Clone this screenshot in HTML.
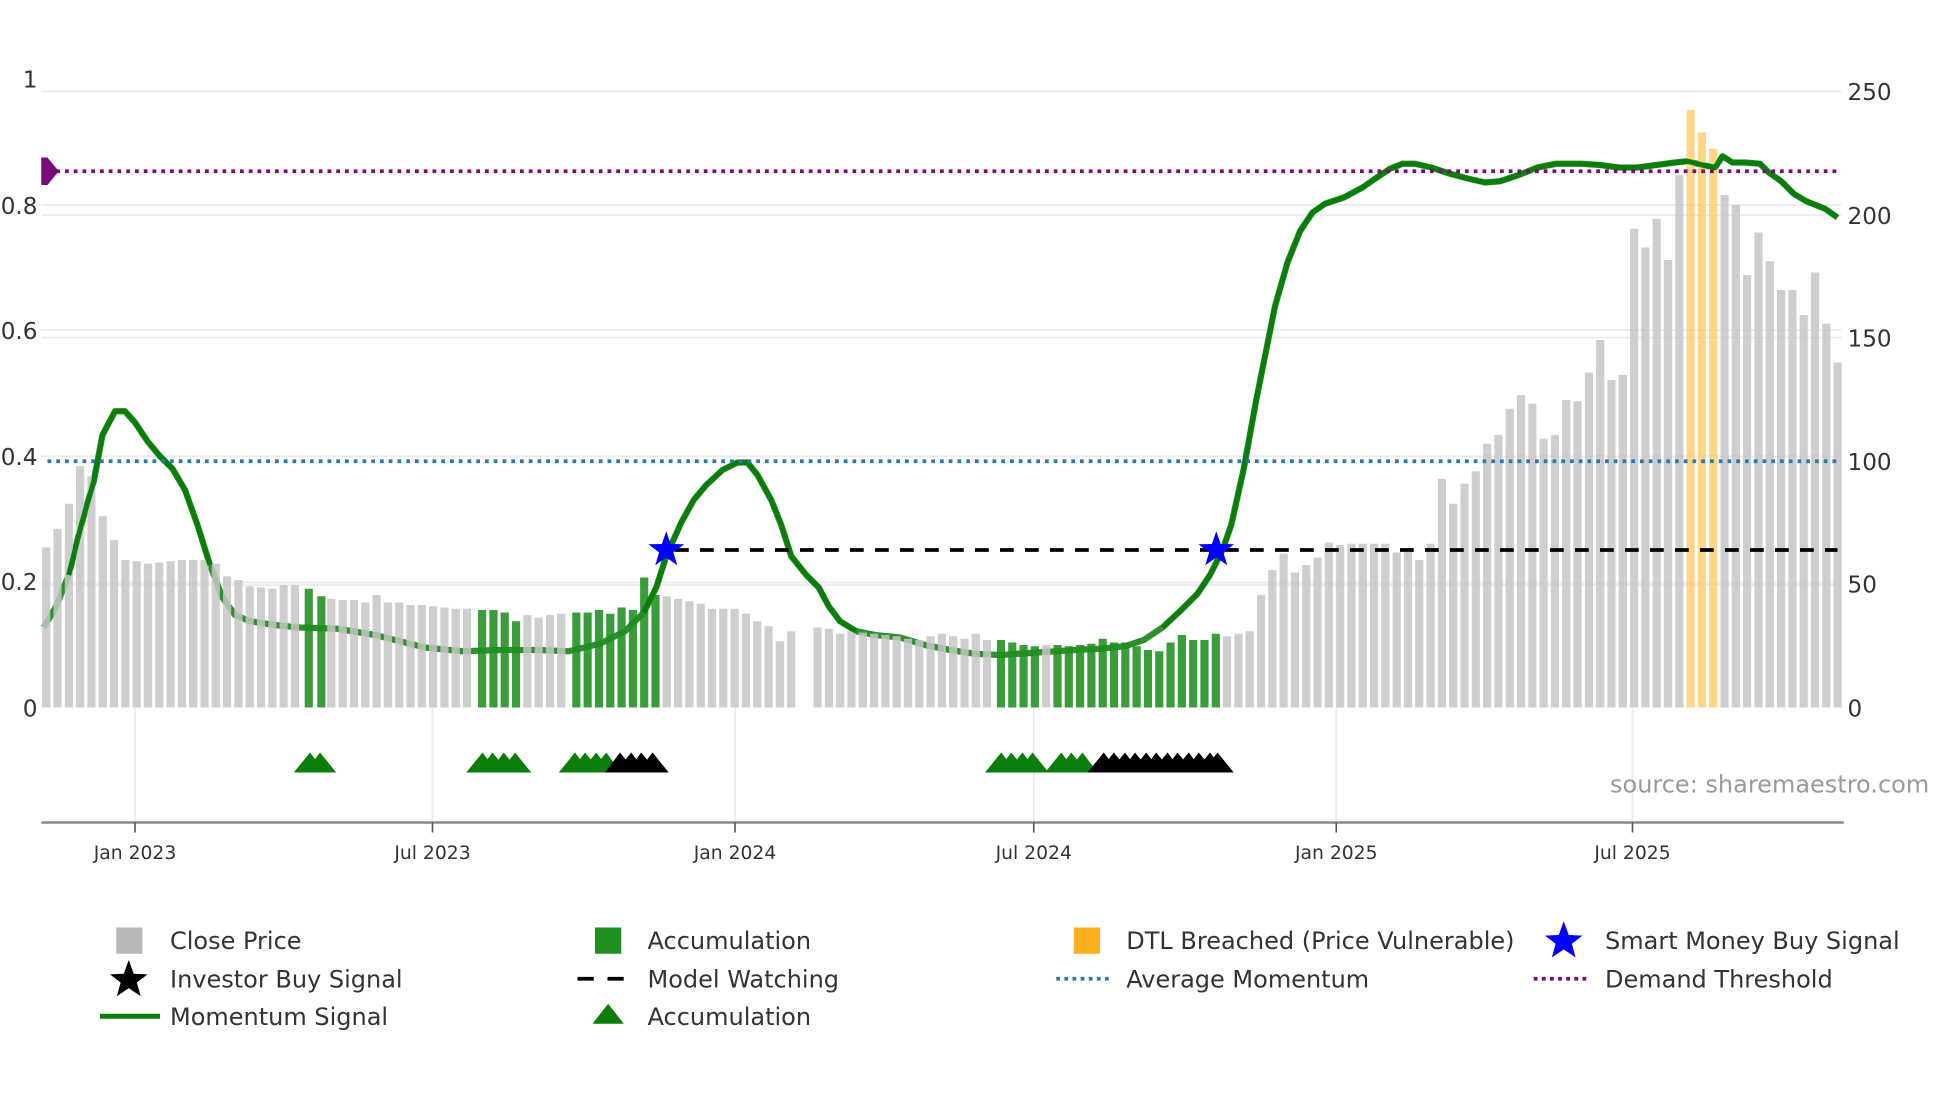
<!DOCTYPE html>
<html><head><meta charset="utf-8"><style>
html,body{margin:0;padding:0;background:#fff;}
svg{display:block;}
text{font-family:"DejaVu Sans","Liberation Sans",sans-serif;fill:#333;}
</style></head><body>
<svg width="1960" height="1102" viewBox="0 0 1568 881.6" preserveAspectRatio="none" xmlns="http://www.w3.org/2000/svg">
<rect width="1568" height="882" fill="#fff"/>
<g stroke="#ececf0" stroke-width="1.5">
<line x1="33" y1="73" x2="1473" y2="73"/>
<line x1="33" y1="164" x2="1473" y2="164"/>
<line x1="33" y1="172" x2="1473" y2="172"/>
<line x1="33" y1="264" x2="1473" y2="264"/>
<line x1="33" y1="270" x2="1473" y2="270"/>
<line x1="33" y1="365" x2="1473" y2="365"/>
<line x1="33" y1="466" x2="1473" y2="466"/>
<line x1="33" y1="468" x2="1473" y2="468"/>
<line x1="108" y1="566" x2="108" y2="658"/>
<line x1="346" y1="566" x2="346" y2="658"/>
<line x1="588" y1="566" x2="588" y2="658"/>
<line x1="827" y1="566" x2="827" y2="658"/>
<line x1="1069" y1="566" x2="1069" y2="658"/>
<line x1="1306" y1="566" x2="1306" y2="658"/>
</g>
<g font-size="18.5">
<text x="30" y="70" text-anchor="end">1</text>
<text x="30" y="171" text-anchor="end">0.8</text>
<text x="30" y="271" text-anchor="end">0.6</text>
<text x="30" y="372" text-anchor="end">0.4</text>
<text x="30" y="472" text-anchor="end">0.2</text>
<text x="30" y="573" text-anchor="end">0</text>
<text x="1478" y="80">250</text>
<text x="1478" y="179">200</text>
<text x="1478" y="277">150</text>
<text x="1478" y="376">100</text>
<text x="1478" y="474">50</text>
<text x="1478" y="573">0</text>
</g>
<polyline fill="none" stroke="#0a7d0a" stroke-width="5" stroke-opacity="0.85" stroke-linejoin="round" points="35,502 45,485 55,460 65,420 75,385 82,348 92,329 100,329 108,338 118,353 128,365 138,375 148,392 158,420 168,452 178,478 188,492 200,497 220,500 240,502 270,503 300,508 320,513 340,518 370,521 400,520 430,520 455,521 480,515 500,505 515,490 525,470 533,445 545,418 555,400 565,388 578,376 590,370 598,370 606,380 617,400 625,420 633,445 645,460 655,470 663,485 672,497 685,505 700,508 720,510 740,516 760,520 780,523 800,524 830,522 860,520 880,519 900,517 915,512 930,502 945,488 958,475 968,460 978,440 985,420 995,375 1005,320 1012,285 1020,245 1030,210 1040,185 1050,170 1060,163 1075,158 1090,150 1100,143 1112,135 1122,131 1132,131 1145,134 1160,139 1175,143 1188,146 1200,145 1215,140 1230,134 1245,131 1265,131 1280,132 1295,134 1310,134 1325,132 1340,130 1350,129 1362,132 1372,134 1378,125 1386,130 1396,130 1408,131 1415,138 1425,145 1435,155 1445,161 1460,167 1470,174"/>
<g transform="translate(33,0) scale(1.005,1) translate(-33,0)">
<g fill="#c6c6c6" opacity="0.85">
<rect x="33.7" y="438" width="6.5" height="128"/><rect x="42.7" y="423" width="6.5" height="143"/><rect x="51.7" y="403" width="6.5" height="163"/><rect x="60.7" y="373" width="6.5" height="193"/><rect x="69.7" y="381" width="6.5" height="185"/><rect x="78.7" y="413" width="6.5" height="153"/><rect x="87.7" y="432" width="6.5" height="134"/><rect x="96.7" y="448" width="6.5" height="118"/><rect x="105.7" y="449" width="6.5" height="117"/><rect x="114.7" y="451" width="6.5" height="115"/><rect x="123.7" y="450" width="6.5" height="116"/><rect x="132.7" y="449" width="6.5" height="117"/><rect x="141.7" y="448" width="6.5" height="118"/><rect x="150.7" y="448" width="6.5" height="118"/><rect x="159.7" y="448" width="6.5" height="118"/><rect x="168.7" y="451" width="6.5" height="115"/><rect x="177.7" y="461" width="6.5" height="105"/><rect x="186.7" y="464" width="6.5" height="102"/><rect x="195.7" y="469" width="6.5" height="97"/><rect x="204.7" y="470" width="6.5" height="96"/><rect x="213.7" y="471" width="6.5" height="95"/><rect x="222.7" y="468" width="6.5" height="98"/><rect x="231.7" y="468" width="6.5" height="98"/>
<rect x="260.7" y="479" width="6.5" height="87"/><rect x="269.7" y="480" width="6.5" height="86"/><rect x="278.7" y="480" width="6.5" height="86"/><rect x="287.7" y="482" width="6.5" height="84"/><rect x="296.7" y="476" width="6.5" height="90"/><rect x="305.7" y="482" width="6.5" height="84"/><rect x="314.7" y="482" width="6.5" height="84"/><rect x="323.7" y="484" width="6.5" height="82"/><rect x="332.7" y="484" width="6.5" height="82"/><rect x="341.7" y="485" width="6.5" height="81"/><rect x="350.7" y="486" width="6.5" height="80"/><rect x="359.7" y="487" width="6.5" height="79"/><rect x="368.7" y="487" width="6.5" height="79"/>
<rect x="416.7" y="492" width="6.5" height="74"/><rect x="425.7" y="494" width="6.5" height="72"/><rect x="434.7" y="492" width="6.5" height="74"/><rect x="443.7" y="491" width="6.5" height="75"/>
<rect x="527.7" y="477" width="6.5" height="89"/><rect x="536.7" y="479" width="6.5" height="87"/><rect x="545.7" y="481" width="6.5" height="85"/><rect x="554.7" y="483" width="6.5" height="83"/><rect x="563.7" y="487" width="6.5" height="79"/><rect x="572.7" y="487" width="6.5" height="79"/><rect x="581.7" y="487" width="6.5" height="79"/><rect x="590.7" y="491" width="6.5" height="75"/><rect x="599.7" y="497" width="6.5" height="69"/><rect x="608.7" y="501" width="6.5" height="65"/><rect x="617.7" y="513" width="6.5" height="53"/><rect x="626.7" y="505" width="6.5" height="61"/>
<rect x="647.7" y="502" width="6.5" height="64"/><rect x="656.7" y="503" width="6.5" height="63"/><rect x="665.7" y="507" width="6.5" height="59"/><rect x="674.7" y="505" width="6.5" height="61"/><rect x="683.7" y="506" width="6.5" height="60"/><rect x="692.7" y="507" width="6.5" height="59"/><rect x="701.7" y="508" width="6.5" height="58"/><rect x="710.7" y="509" width="6.5" height="57"/><rect x="719.7" y="511" width="6.5" height="55"/><rect x="728.7" y="512" width="6.5" height="54"/><rect x="737.7" y="509" width="6.5" height="57"/><rect x="746.7" y="507" width="6.5" height="59"/><rect x="755.7" y="509" width="6.5" height="57"/><rect x="764.7" y="511" width="6.5" height="55"/><rect x="773.7" y="507" width="6.5" height="59"/><rect x="782.7" y="512" width="6.5" height="54"/>
<rect x="829.7" y="516" width="6.5" height="50"/>
<rect x="973.7" y="509" width="6.5" height="57"/><rect x="982.7" y="507" width="6.5" height="59"/><rect x="991.7" y="505" width="6.5" height="61"/><rect x="1000.7" y="476" width="6.5" height="90"/><rect x="1009.7" y="456" width="6.5" height="110"/><rect x="1018.7" y="443" width="6.5" height="123"/><rect x="1027.7" y="458" width="6.5" height="108"/><rect x="1036.7" y="452" width="6.5" height="114"/><rect x="1045.7" y="446" width="6.5" height="120"/><rect x="1054.7" y="434" width="6.5" height="132"/><rect x="1063.7" y="436" width="6.5" height="130"/><rect x="1072.7" y="435" width="6.5" height="131"/><rect x="1081.7" y="435" width="6.5" height="131"/><rect x="1090.7" y="435" width="6.5" height="131"/><rect x="1099.7" y="435" width="6.5" height="131"/><rect x="1108.7" y="442" width="6.5" height="124"/><rect x="1117.7" y="440" width="6.5" height="126"/><rect x="1126.7" y="448" width="6.5" height="118"/><rect x="1135.7" y="435" width="6.5" height="131"/><rect x="1144.7" y="383" width="6.5" height="183"/><rect x="1153.7" y="403" width="6.5" height="163"/><rect x="1162.7" y="387" width="6.5" height="179"/><rect x="1171.7" y="377" width="6.5" height="189"/><rect x="1180.7" y="355" width="6.5" height="211"/><rect x="1189.7" y="348" width="6.5" height="218"/><rect x="1198.7" y="327" width="6.5" height="239"/><rect x="1207.7" y="316" width="6.5" height="250"/><rect x="1216.7" y="323" width="6.5" height="243"/><rect x="1225.7" y="351" width="6.5" height="215"/><rect x="1234.7" y="348" width="6.5" height="218"/><rect x="1243.7" y="320" width="6.5" height="246"/><rect x="1252.7" y="321" width="6.5" height="245"/><rect x="1261.7" y="298" width="6.5" height="268"/><rect x="1270.7" y="272" width="6.5" height="294"/><rect x="1279.7" y="304" width="6.5" height="262"/><rect x="1288.7" y="300" width="6.5" height="266"/><rect x="1297.7" y="183" width="6.5" height="383"/><rect x="1306.7" y="198" width="6.5" height="368"/><rect x="1315.7" y="175" width="6.5" height="391"/><rect x="1324.7" y="208" width="6.5" height="358"/><rect x="1333.7" y="140" width="6.5" height="426"/>
<rect x="1369.7" y="156" width="6.5" height="410"/><rect x="1378.7" y="164" width="6.5" height="402"/><rect x="1387.7" y="220" width="6.5" height="346"/><rect x="1396.7" y="186" width="6.5" height="380"/><rect x="1405.7" y="209" width="6.5" height="357"/><rect x="1414.7" y="232" width="6.5" height="334"/><rect x="1423.7" y="232" width="6.5" height="334"/><rect x="1432.7" y="252" width="6.5" height="314"/><rect x="1441.7" y="218" width="6.5" height="348"/><rect x="1450.7" y="259" width="6.5" height="307"/><rect x="1459.7" y="290" width="6.5" height="276"/>
</g>
<g fill="#1f8f1f" opacity="0.88">
<rect x="242.7" y="471" width="6.5" height="95"/><rect x="252.7" y="477" width="6.5" height="89"/>
<rect x="380.7" y="488" width="6.5" height="78"/><rect x="389.7" y="488" width="6.5" height="78"/><rect x="398.7" y="490" width="6.5" height="76"/><rect x="407.7" y="497" width="6.5" height="69"/>
<rect x="455.7" y="490" width="6.5" height="76"/><rect x="464.7" y="490" width="6.5" height="76"/><rect x="473.7" y="488" width="6.5" height="78"/><rect x="482.7" y="491" width="6.5" height="75"/><rect x="491.7" y="486" width="6.5" height="80"/><rect x="500.7" y="488" width="6.5" height="78"/><rect x="509.7" y="462" width="6.5" height="104"/><rect x="518.7" y="476" width="6.5" height="90"/>
<rect x="793.7" y="512" width="6.5" height="54"/><rect x="802.7" y="514" width="6.5" height="52"/><rect x="811.7" y="516" width="6.5" height="50"/><rect x="820.7" y="517" width="6.5" height="49"/>
<rect x="838.7" y="516" width="6.5" height="50"/><rect x="847.7" y="517" width="6.5" height="49"/><rect x="856.7" y="516" width="6.5" height="50"/><rect x="865.7" y="515" width="6.5" height="51"/><rect x="874.7" y="511" width="6.5" height="55"/><rect x="883.7" y="514" width="6.5" height="52"/><rect x="892.7" y="514" width="6.5" height="52"/><rect x="901.7" y="517" width="6.5" height="49"/><rect x="910.7" y="520" width="6.5" height="46"/><rect x="919.7" y="521" width="6.5" height="45"/><rect x="928.7" y="514" width="6.5" height="52"/><rect x="937.7" y="508" width="6.5" height="58"/><rect x="946.7" y="512" width="6.5" height="54"/><rect x="955.7" y="512" width="6.5" height="54"/><rect x="964.7" y="507" width="6.5" height="59"/>
</g>
<g fill="#ffc860" opacity="0.75">
<rect x="1342.7" y="88" width="6.5" height="478"/><rect x="1351.7" y="106" width="6.5" height="460"/><rect x="1360.7" y="119" width="6.5" height="447"/>
</g>
</g>
<polyline fill="none" stroke="#0a7d0a" stroke-width="4" stroke-linejoin="round" points="55,460 65,420 75,385 82,348 92,329 100,329 108,338 118,353 128,365 138,375 148,392 158,420 168,452"/>
<polyline fill="none" stroke="#0a7d0a" stroke-width="4" stroke-linejoin="round" points="515,490 525,470 533,445 545,418 555,400 565,388 578,376 590,370 598,370 606,380 617,400 625,420 633,445 645,460 655,470 663,485 672,497 685,505"/>
<polyline fill="none" stroke="#0a7d0a" stroke-width="4" stroke-linejoin="round" points="930,502 945,488 958,475 968,460 978,440 985,420 995,375 1005,320 1012,285 1020,245 1030,210 1040,185 1050,170 1060,163 1075,158 1090,150 1100,143 1112,135 1122,131 1132,131 1145,134 1160,139 1175,143 1188,146 1200,145 1215,140 1230,134 1245,131 1265,131 1280,132 1295,134 1310,134 1325,132 1340,130 1350,129 1362,132 1372,134 1378,125 1386,130 1396,130 1408,131 1415,138 1425,145 1435,155 1445,161 1460,167 1470,174"/>
<line x1="38" y1="137" x2="1473" y2="137" stroke="#7a0a7a" stroke-width="3" stroke-dasharray="3,4"/>
<path d="M33,126 L38,126 L47,137 L38,148 L33,148 Z" fill="#7a0a7a"/>
<line x1="38" y1="369" x2="1473" y2="369" stroke="#2a78b0" stroke-width="3" stroke-dasharray="3,4"/>
<line x1="540" y1="440" x2="1470" y2="440" stroke="#000" stroke-width="3" stroke-dasharray="11,9"/>
<polygon fill="#0000ff" points="533,425 536.5,435.2 547.3,435.4 538.7,441.9 541.8,452.2 533,446 524.2,452.2 527.3,441.9 518.7,435.4 529.5,435.2"/>
<polygon fill="#0000ff" points="973,425 976.5,435.2 987.3,435.4 978.7,441.9 981.8,452.2 973,446 964.2,452.2 967.3,441.9 958.7,435.4 969.5,435.2"/>
<g fill="#0a7d0a">
<polygon points="235,618 248,602 260,618"/><polygon points="244,618 256,602 269,618"/>
<polygon points="373,618 386,602 398,618"/><polygon points="382,618 394,602 407,618"/><polygon points="391,618 403,602 416,618"/><polygon points="400,618 412,602 425,618"/>
<polygon points="447,618 460,602 472,618"/><polygon points="456,618 468,602 481,618"/><polygon points="464,618 477,602 489,618"/><polygon points="472,618 485,602 497,618"/>
<polygon points="788,618 801,602 813,618"/><polygon points="797,618 809,602 822,618"/><polygon points="805,618 818,602 830,618"/><polygon points="814,618 826,602 839,618"/><polygon points="836,618 849,602 861,618"/><polygon points="845,618 857,602 870,618"/><polygon points="853,618 866,602 878,618"/>
</g>
<g fill="#000">
<polygon points="484,618 496,602 509,618"/><polygon points="492,618 505,602 517,618"/><polygon points="501,618 513,602 526,618"/><polygon points="510,618 522,602 535,618"/>
<polygon points="870,618 883,602 895,618"/><polygon points="879,618 891,602 904,618"/><polygon points="887,618 900,602 912,618"/><polygon points="896,618 908,602 921,618"/><polygon points="904,618 917,602 929,618"/><polygon points="913,618 925,602 938,618"/><polygon points="921,618 934,602 946,618"/><polygon points="930,618 942,602 955,618"/><polygon points="938,618 951,602 963,618"/><polygon points="947,618 959,602 972,618"/><polygon points="955,618 968,602 980,618"/><polygon points="962,618 974,602 987,618"/>
</g>
<text x="1288" y="634" font-size="19.2" style="fill:#9a9a9a">source: sharemaestro.com</text>
<line x1="33" y1="658" x2="1475" y2="658" stroke="#8a8a8a" stroke-width="2"/>
<g stroke="#555" stroke-width="1.3">
<line x1="108" y1="658" x2="108" y2="666"/><line x1="346" y1="658" x2="346" y2="666"/><line x1="588" y1="658" x2="588" y2="666"/><line x1="827" y1="658" x2="827" y2="666"/><line x1="1069" y1="658" x2="1069" y2="666"/><line x1="1306" y1="658" x2="1306" y2="666"/>
</g>
<g font-size="15" text-anchor="middle">
<text x="108" y="687">Jan 2023</text><text x="346" y="687">Jul 2023</text><text x="588" y="687">Jan 2024</text><text x="827" y="687">Jul 2024</text><text x="1069" y="687">Jan 2025</text><text x="1306" y="687">Jul 2025</text>
</g>
<rect x="93" y="742" width="21" height="21" fill="#b8b8b8"/>
<rect x="476" y="742" width="21" height="21" fill="#1f8f1f"/>
<rect x="859" y="742" width="21" height="21" fill="#ffae20"/>
<polygon fill="#0000ff" points="1251,737 1255,748 1266,748.5 1257.5,755 1260.5,766 1251,759.5 1241.5,766 1244.5,755 1236,748.5 1247,748"/>
<polygon fill="#000" points="103,768 107,779 118,779.5 109.5,786 112.5,797 103,790.5 93.5,797 96.5,786 88,779.5 99,779"/>
<line x1="462" y1="783" x2="508" y2="783" stroke="#000" stroke-width="3" stroke-dasharray="13,11"/>
<line x1="845" y1="783" x2="890" y2="783" stroke="#2a78b0" stroke-width="3" stroke-dasharray="3,3.5"/>
<line x1="1227" y1="783" x2="1272" y2="783" stroke="#7a0a7a" stroke-width="3" stroke-dasharray="3,3.5"/>
<line x1="80" y1="813" x2="128" y2="813" stroke="#0a7d0a" stroke-width="4"/>
<polygon fill="#0a7d0a" points="474,819 486.5,803 499,819"/>
<g font-size="19.2">
<text x="136" y="759">Close Price</text>
<text x="518" y="759">Accumulation</text>
<text x="901" y="759">DTL Breached (Price Vulnerable)</text>
<text x="1284" y="759">Smart Money Buy Signal</text>
<text x="136" y="790">Investor Buy Signal</text>
<text x="518" y="790">Model Watching</text>
<text x="901" y="790">Average Momentum</text>
<text x="1284" y="790">Demand Threshold</text>
<text x="136" y="820">Momentum Signal</text>
<text x="518" y="820">Accumulation</text>
</g>
</svg>
</body></html>
